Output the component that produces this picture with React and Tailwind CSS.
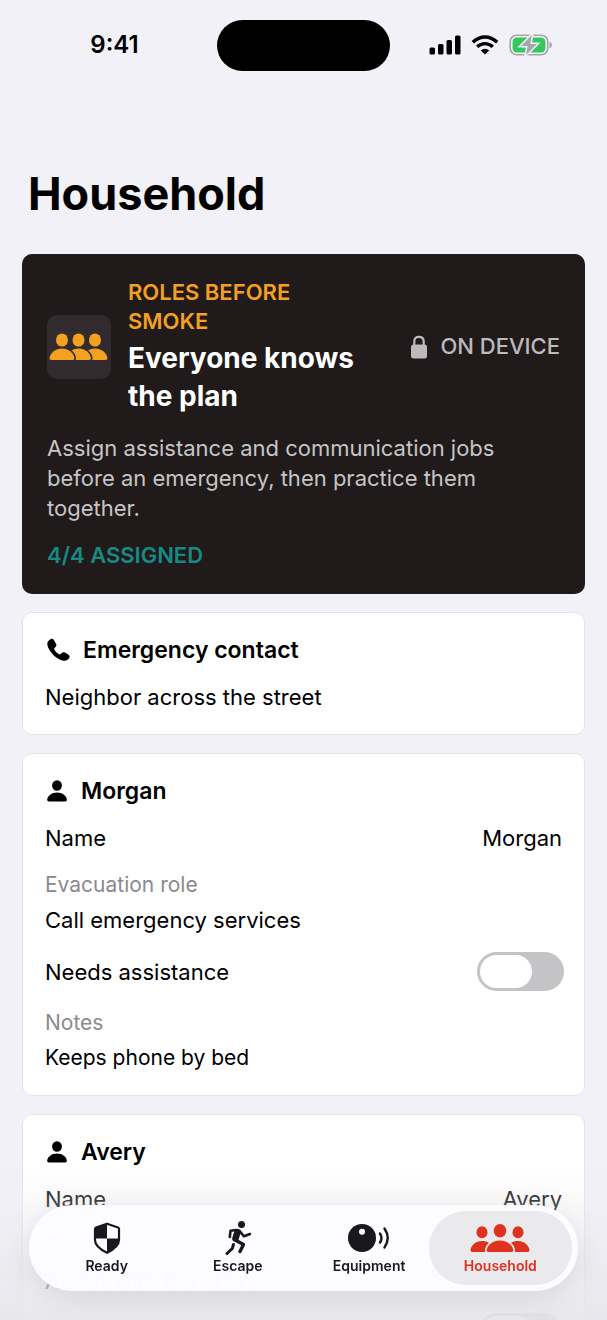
import { useState } from "react";

const bust = "M2.500 27C1 27 .4 26.200 .6 24.800C1.400 20 6.500 15.500 13 15.500S24.600 20 25.400 24.800C25.600 26.200 25 27 23.500 27Z";

// Three overlapping people, the left one in front
const TrioIcon = () => (
  <svg className="h-7 w-[60px]" viewBox="0 0 60 28" fill="currentColor" aria-hidden="true">
    {[33, 16.500, 0].map((x) => (
      <g key={x} transform={`translate(${x} 0)`}>
        <path d={bust} stroke="#312b2d" strokeWidth="3.200" style={{ paintOrder: "stroke" }} />
        <ellipse cx="13" cy="7" rx="6" ry="6.600" />
      </g>
    ))}
  </svg>
);

const GroupIcon = () => (
  <svg className="h-7 w-[60px]" viewBox="0 0 60 28" fill="currentColor" aria-hidden="true">
    <ellipse cx="12" cy="8.200" rx="5.500" ry="6" />
    <ellipse cx="48" cy="8.200" rx="5.500" ry="6" />
    <ellipse cx="30" cy="6.800" rx="6.300" ry="6.800" />
    <path d="M2.200 28C.8 28 .4 27 .6 25.800C1.200 21 6 17 12 17C14.700 17 17 17.600 19 18.700C16.500 20.800 15 23 15 28Z" />
    <path d="M57.800 28C59.200 28 59.600 27 59.400 25.800C58.800 21 54 17 48 17C45.300 17 43 17.600 41 18.700C43.500 20.800 45 23 45 28Z" />
    <path
      d="M18.500 28C17 28 16.500 27 16.800 25.500C17.800 20.500 23.500 16.500 30 16.500S42.200 20.500 43.200 25.500C43.500 27 43 28 41.500 28Z"
      stroke="#eae9ec"
      strokeWidth="2.600"
      style={{ paintOrder: "stroke" }}
    />
  </svg>
);

const ShieldIcon = () => (
  <svg className="h-8 w-7" viewBox="0 0 28 32" aria-hidden="true">
    <path
      d="M14 1.700L25 5.500Q26 5.900 26 7V18Q26 25 14 30.800Q2 25 2 18V7Q2 5.900 3 5.500Z"
      fill="#fff"
      stroke="currentColor"
      strokeWidth="2.200"
      strokeLinejoin="round"
    />
    <path d="M14 1.700V16.500H26V18Q26 25 14 30.800V16.500H2V7Q2 5.900 3 5.500Z" fill="currentColor" />
  </svg>
);

const RunnerIcon = () => (
  <svg
    className="h-9 w-7"
    viewBox="0 0 28 36"
    fill="none"
    stroke="currentColor"
    strokeLinecap="round"
    strokeLinejoin="round"
    aria-hidden="true"
  >
    <circle cx="17.500" cy="4.500" r="3.500" fill="currentColor" stroke="none" />
    <path d="M5.800 17L6.500 10.800L12 10" strokeWidth="2.600" />
    <path d="M13.500 12L11.500 18.500" strokeWidth="6.500" />
    <path d="M16 11.500L20 16.300L26 14" strokeWidth="2.600" />
    <path d="M12 20.500L19.500 24.500L16 31.500" strokeWidth="3.400" />
    <path d="M9.500 24.500L8.300 28.500L3 33.500" strokeWidth="3" />
  </svg>
);

const DetectorIcon = () => (
  <svg className="h-8 w-[44px]" viewBox="0 0 44 32" fill="none" stroke="currentColor" strokeLinecap="round" aria-hidden="true">
    <circle cx="15" cy="16" r="14" fill="currentColor" stroke="none" />
    <circle cx="15" cy="9.700" r="3" fill="#fff" stroke="none" />
    <path d="M33 11.500Q36 16 33 20.500M37.500 6.500Q44 16 37.500 25.500" strokeWidth="2.400" />
  </svg>
);

const PersonIcon = () => (
  <svg className="h-[22px] w-6" viewBox="0 0 24 22" fill="currentColor" aria-hidden="true">
    <ellipse cx="12" cy="5.500" rx="4.900" ry="5.300" />
    <path d="M4 21.500C2.500 21.500 2 20.500 2.200 19.300C2.900 15.500 7 12.600 12 12.600S21.100 15.500 21.800 19.300C22 20.500 21.500 21.500 20 21.500Z" />
  </svg>
);

const PhoneIcon = () => (
  <svg className="h-6 w-[26px]" viewBox="0 0 26 24" fill="currentColor" aria-hidden="true">
    <path d="M5.500 1.200C7 .4 8.300 1 9.200 2.500L11 5.800C11.700 7.100 11.500 8 10.500 9L9.500 10C9 10.600 9.100 11.100 9.600 11.900C10.600 13.500 12 15 13.800 16C14.600 16.500 15.200 16.500 15.700 16L16.700 15C17.700 14 18.700 13.900 19.900 14.500L23.200 16.400C24.700 17.300 25 18.700 24.200 20C22.600 22.500 20.200 23.200 17.300 22.400C13.600 21.300 10.300 18.900 7.400 15.900C4.600 13 2.800 9.800 2.300 6.600C1.900 4.200 3.500 2.200 5.500 1.200Z" />
  </svg>
);

const LockIcon = () => (
  <svg className="h-6 w-[18px]" viewBox="0 0 18 24" aria-hidden="true">
    <path d="M4.300 11V6.500Q4.300 1.800 9 1.800T13.700 6.500V11" fill="none" stroke="currentColor" strokeWidth="2.200" />
    <rect x="1" y="9.500" width="16" height="14" rx="2.500" fill="currentColor" />
  </svg>
);

const SignalIcon = () => (
  <svg className="h-5 w-8" viewBox="0 0 32 20" aria-hidden="true">
    <rect x="0.500" y="12.500" width="5.500" height="7" rx="1.500" />
    <rect x="9" y="9" width="5.500" height="10.500" rx="1.500" />
    <rect x="17.500" y="5" width="5.500" height="14.500" rx="1.500" />
    <rect x="26" y="0.500" width="5.500" height="19" rx="1.500" />
  </svg>
);

const WifiIcon = () => (
  <svg className="h-5 w-7" viewBox="0 0 28 20" fill="none" stroke="#000" strokeWidth="3.400" aria-hidden="true">
    <path d="M1.800 7.200Q7.300 2 14 2T26.200 7.200" />
    <path d="M6.200 11.800Q9.700 8.600 14 8.600T21.800 11.800" />
    <path d="M14 19.600L9.800 15.500Q14 11.800 18.200 15.500Z" fill="#000" stroke="none" />
  </svg>
);

const BatteryIcon = () => (
  <svg className="h-6 w-11" viewBox="0 0 44 24" aria-hidden="true">
    <rect x="1.200" y="2.200" width="37.600" height="19.600" rx="6.500" fill="none" stroke="#a5a5aa" strokeWidth="1.600" />
    <rect x="3.600" y="4.600" width="32.800" height="14.800" rx="4.200" fill="#34c759" />
    <path d="M40.500 8.500Q43 9.500 43 12T40.500 15.500Z" fill="#a5a5aa" />
    <path
      d="M22.800 2L12 13H18.600L17 22L28 11H21.400Z"
      fill="#a5a5aa"
      stroke="#f2f1f8"
      strokeWidth="3"
      style={{ paintOrder: "stroke" }}
    />
  </svg>
);

const tabs = [
  { name: "Ready", icon: <ShieldIcon /> },
  { name: "Escape", icon: <RunnerIcon /> },
  { name: "Equipment", icon: <DetectorIcon /> },
  { name: "Household", icon: <GroupIcon /> },
];

const members = [
  { name: "Morgan", role: "Call emergency services", notes: "Keeps phone by bed" },
  { name: "Avery", role: "Assist with the stairs", notes: "Sleeps upstairs" },
];

const Card = ({ icon, title, children }) => (
  <section className="flex flex-col gap-[17px] rounded-[10px] border border-[#e4e3e9] bg-white py-[22px] pr-5 pl-[22px] text-[22px] leading-[30px]">
    <h2 className="flex items-center gap-3 text-[23px] font-semibold">
      {icon}
      {title}
    </h2>
    {children}
  </section>
);

const Member = ({ member }) => {
  const [assist, setAssist] = useState(false);
  const id = member.name.toLowerCase();

  return (
    <Card icon={<PersonIcon />} title={member.name}>
      <div className="flex justify-between">
        <label htmlFor={`${id}-name`}>Name</label>
        <input
          id={`${id}-name`}
          className="h-[30px] min-w-0 flex-1 pr-0.5 text-right outline-none"
          defaultValue={member.name}
        />
      </div>
      <div className="flex flex-col gap-[5px]">
        <label htmlFor={`${id}-role`} className="text-[21px] text-[#8a8a8e]">
          Evacuation role
        </label>
        <input id={`${id}-role`} className="h-[30px] w-full outline-none" defaultValue={member.role} />
      </div>
      <div className="flex items-center justify-between">
        <label htmlFor={`${id}-assist`}>Needs assistance</label>
        <input
          id={`${id}-assist`}
          type="checkbox"
          role="switch"
          checked={assist}
          onChange={(e) => setAssist(e.target.checked)}
          className="flex h-[39px] w-[87px] appearance-none rounded-full bg-[#c4c4c6] p-[3px] before:h-[33px] before:w-[52px] before:rounded-full before:bg-white checked:justify-end checked:bg-[#34c759]"
        />
      </div>
      <div className="flex flex-col gap-[5px] text-[21px]">
        <label htmlFor={`${id}-notes`} className="text-[#8a8a8e]">
          Notes
        </label>
        <input id={`${id}-notes`} className="h-[30px] w-full outline-none" defaultValue={member.notes} />
      </div>
    </Card>
  );
};

const App = () => {
  const [active, setActive] = useState("Household");

  return (
    <div className="h-screen overflow-y-auto bg-[#f2f1f8] font-['Inter','Liberation_Sans',sans-serif] text-black [scrollbar-width:none]">
      <header className="grid h-[90px] grid-cols-[1fr_173px_1fr] items-center">
        <span className="justify-self-center pl-3 text-[24px] font-semibold">9:41</span>
        <div className="h-[51px] rounded-full bg-black" />
        <div className="flex items-center gap-2.5 justify-self-center pr-4">
          <SignalIcon />
          <WifiIcon />
          <BatteryIcon />
        </div>
      </header>

      <main className="flex flex-col gap-[18px] px-[22px] pb-36">
        <h1 className="px-1.5 pt-[74px] pb-3 text-[45px] leading-[60px] font-bold">Household</h1>

        <section className="flex flex-col gap-[18px] rounded-[10px] bg-[#201a1b] px-[25px] py-6 text-[22px]">
          <div className="flex items-center gap-[17px]">
            <div className="flex size-16 shrink-0 items-center justify-center rounded-[10px] bg-[#312b2d] text-[#f4a020]">
              <TrioIcon />
            </div>
            <div className="max-w-[250px] flex-1">
              <p className="max-w-[200px] leading-[29px] font-semibold text-[#f4a020]">ROLES BEFORE SMOKE</p>
              <h2 className="pt-[3px] text-[28px] leading-[38px] font-bold text-white">Everyone knows the plan</h2>
            </div>
            <p className="ml-auto flex items-center gap-3 font-medium whitespace-nowrap text-[#bcbabb]">
              <LockIcon />
              ON DEVICE
            </p>
          </div>
          <p className="leading-[30px] text-[#c7c5c6]">
            Assign assistance and communication jobs before an emergency, then practice them together.
          </p>
          <p className="leading-[29px] font-semibold text-[#168a83]">4/4 ASSIGNED</p>
        </section>

        <Card icon={<PhoneIcon />} title="Emergency contact">
          <input
            aria-label="Emergency contact"
            className="h-[30px] w-full outline-none"
            defaultValue="Neighbor across the street"
          />
        </Card>

        {members.map((member) => (
          <Member key={member.name} member={member} />
        ))}
      </main>

      <div className="pointer-events-none fixed inset-x-0 bottom-0 bg-linear-to-b from-transparent via-[#ececf0]/60 to-[#e6e5ea]/90 px-[29px] pt-10 pb-[29px]">
        <nav className="pointer-events-auto flex rounded-full bg-[#fdfcff]/97 px-3 py-1.5 shadow-[0_6px_30px_rgba(0,0,0,0.1)]">
          {tabs.map((tab) => (
            <button
              key={tab.name}
              type="button"
              aria-current={active === tab.name ? "page" : undefined}
              onClick={() => setActive(tab.name)}
              className={`relative flex h-[74px] flex-1 flex-col items-center justify-center text-[14px] leading-5 font-semibold ${
                active === tab.name ? "text-[#e03020]" : "text-[#19181c]"
              }`}
            >
              {active === tab.name && <span className="absolute -inset-x-1.5 inset-y-0 rounded-full bg-[#eae9ec]" />}
              <span className="relative flex h-9 items-center">{tab.icon}</span>
              <span className="relative">{tab.name}</span>
            </button>
          ))}
        </nav>
      </div>
    </div>
  );
};

export default App;
